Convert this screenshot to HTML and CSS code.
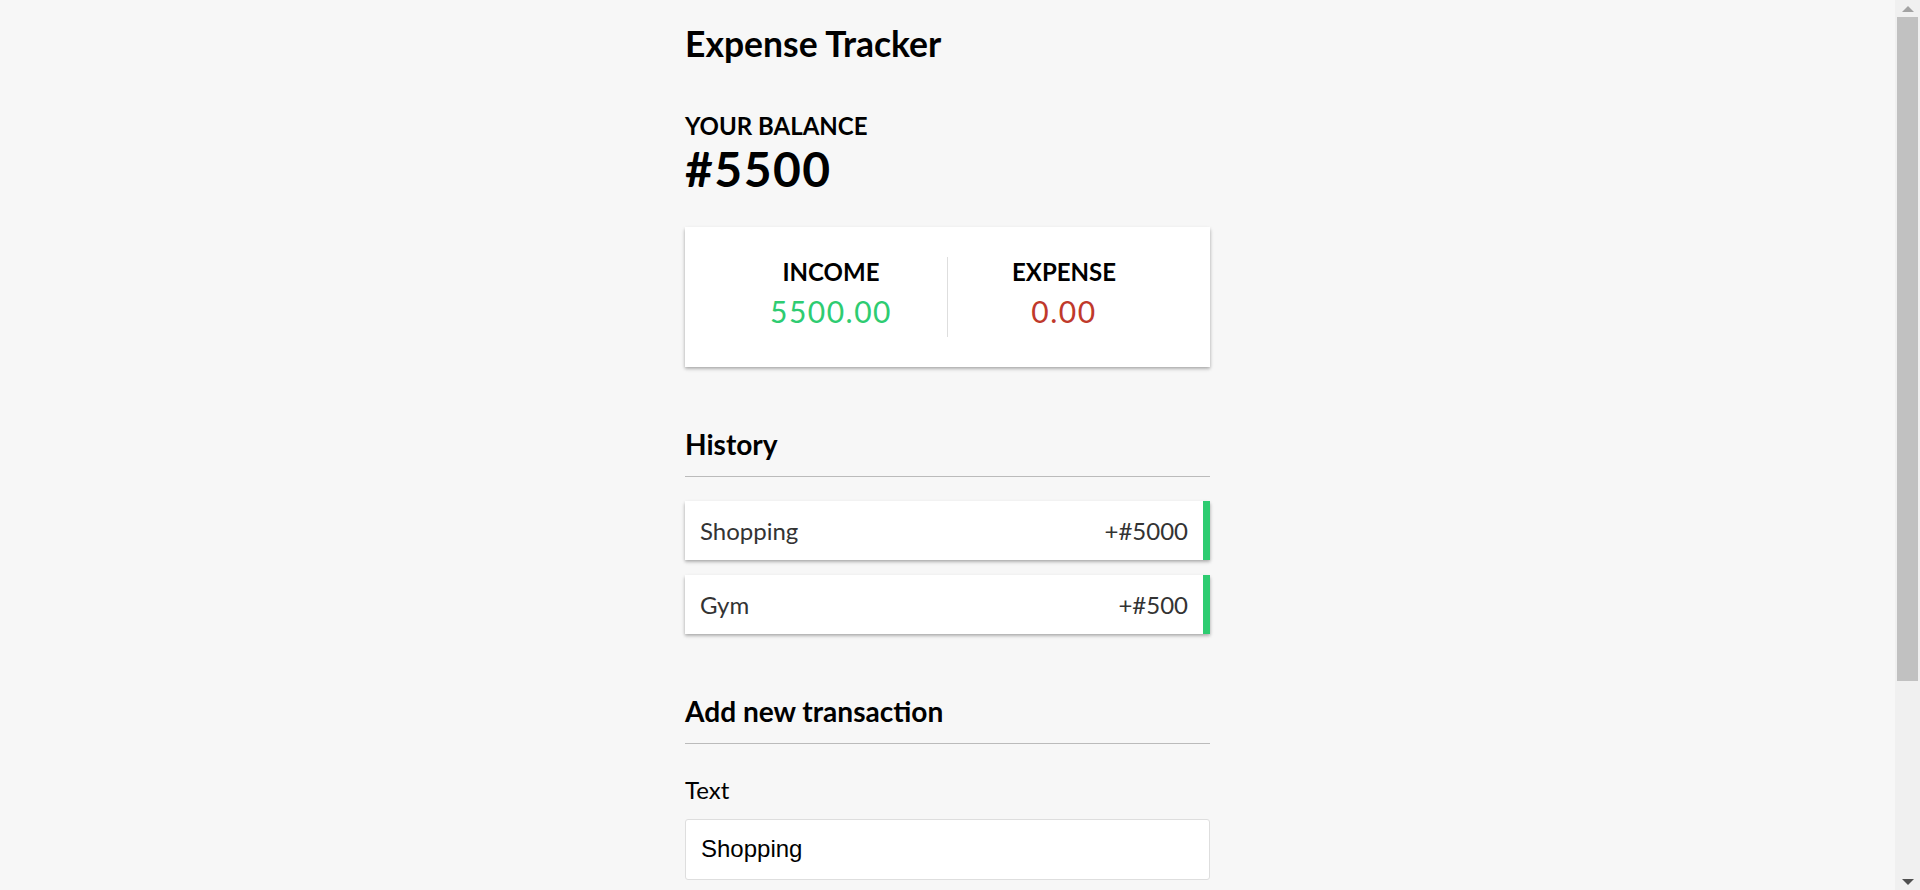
FILE: index.html
```html
<!DOCTYPE html>
<html lang="en">
<head>
<meta charset="UTF-8">
<title>Expense Tracker</title>
<link rel="stylesheet" href="styles.css">
</head>
<body>
  <div class="container">
    <h2 class="title">Expense Tracker</h2>

    <h4 class="label-caps">Your Balance</h4>
    <h1 class="balance">#5500</h1>

    <div class="inc-exp">
      <div class="inc-exp-col">
        <h4 class="label-caps">Income</h4>
        <p class="money plus">5500.00</p>
      </div>
      <div class="inc-exp-col">
        <h4 class="label-caps">Expense</h4>
        <p class="money minus">0.00</p>
      </div>
    </div>

    <h3 class="section-title">History</h3>
    <ul class="list">
      <li class="item plus"><span>Shopping</span><span>+#5000</span></li>
      <li class="item plus"><span>Gym</span><span>+#500</span></li>
    </ul>

    <h3 class="section-title">Add new transaction</h3>
    <form class="form">
      <div class="form-control">
        <label class="field-label" for="text">Text</label>
        <input class="field-input" type="text" id="text" value="Shopping" placeholder="Enter text...">
      </div>
      <div class="form-control">
        <label class="field-label" for="amount">Amount <br>(negative - expense, positive - income)</label>
        <input class="field-input" type="number" id="amount" placeholder="Enter amount...">
      </div>
      <button class="btn" type="button">Add transaction</button>
    </form>
  </div>

  <div class="scrollbar" aria-hidden="true">
    <div class="scroll-btn">
      <svg width="12" height="6" viewBox="0 0 12 6"><polygon points="6,0 12,6 0,6" fill="#a3a3a3"/></svg>
    </div>
    <div class="scroll-track">
      <div class="scroll-thumb"></div>
    </div>
    <div class="scroll-btn">
      <svg width="12" height="6" viewBox="0 0 12 6"><polygon points="0,0 12,0 6,6" fill="#505050"/></svg>
    </div>
  </div>
</body>
</html>
```

FILE: styles.css
```css
* {
  box-sizing: border-box;
}

html {
  overflow: hidden;
}

body {
  margin: 0;
  padding-right: 25px;
  background-color: #f7f7f7;
  font-family: "Lato", "Noto Sans", sans-serif;
  font-size: 24px;
  color: #000;
}

/* window scrollbar (drawn, sits over the page edge) */
.scrollbar {
  position: fixed;
  top: 0;
  right: 0;
  bottom: 0;
  width: 25px;
  background: #f0f0f0;
  display: flex;
  flex-direction: column;
}

.scroll-btn {
  height: 17px;
  display: flex;
  align-items: center;
  justify-content: center;
}

.scroll-btn svg {
  display: block;
}

.scroll-track {
  flex: 1;
  padding: 0 2px;
}

.scroll-thumb {
  height: 664px;
  background: #c1c1c1;
}

.container {
  width: 525px;
  margin: 0 auto;
  padding: 22px 0 60px;
}

.title {
  font-size: 35.5px;
  font-weight: 700;
  margin: 0 0 45.5px;
}

.label-caps {
  font-size: 24px;
  font-weight: 700;
  text-transform: uppercase;
  margin: 0;
}

.balance {
  font-size: 48px;
  font-weight: 700;
  letter-spacing: 1.5px;
  margin: 0;
}

.inc-exp {
  background-color: #fff;
  box-shadow: 0 1.5px 4.5px rgba(0, 0, 0, 0.12), 0 1.5px 3px rgba(0, 0, 0, 0.24);
  padding: 30px;
  display: flex;
  justify-content: space-between;
  margin: 30px 0;
}

.inc-exp-col {
  flex: 1;
  text-align: center;
}

.inc-exp-col:first-child {
  border-right: 1px solid #dedede;
}

.money {
  font-size: 30px;
  letter-spacing: 1.5px;
  margin: 7.5px 0;
}

.money.plus {
  color: #2ecc71;
}

.money.minus {
  color: #c0392b;
}

.section-title {
  font-size: 28.08px;
  font-weight: 700;
  border-bottom: 1px solid #bbb;
  padding-bottom: 15px;
  margin: 60px 0 15px;
}

.list {
  list-style: none;
  padding: 0;
  margin: 24px 0 60px;
}

.item {
  background-color: #fff;
  box-shadow: 0 1.5px 4.5px rgba(0, 0, 0, 0.12), 0 1.5px 3px rgba(0, 0, 0, 0.24);
  color: #333;
  display: flex;
  justify-content: space-between;
  padding: 15px;
  margin: 15px 0;
}

.item.plus {
  border-right: 7px solid #2ecc71;
}

.item.minus {
  border-right: 7px solid #c0392b;
}

.form-control {
  display: block;
}

.field-label {
  display: inline-block;
  margin: 16px 0 15px;
}

.field-input {
  display: block;
  width: 100%;
  border: 1.5px solid #dedede;
  border-radius: 3px;
  padding: 15.5px 15px;
  font-family: "Liberation Sans", Arial, sans-serif;
  font-size: 24px;
  color: #000;
  background: #fff;
}

.btn {
  display: block;
  width: 100%;
  margin: 15px 0 45px;
  padding: 15px;
  border: 0;
  background-color: #9c88ff;
  color: #fff;
  font-family: "Liberation Sans", Arial, sans-serif;
  font-size: 24px;
  box-shadow: 0 1.5px 4.5px rgba(0, 0, 0, 0.12), 0 1.5px 3px rgba(0, 0, 0, 0.24);
}
```
